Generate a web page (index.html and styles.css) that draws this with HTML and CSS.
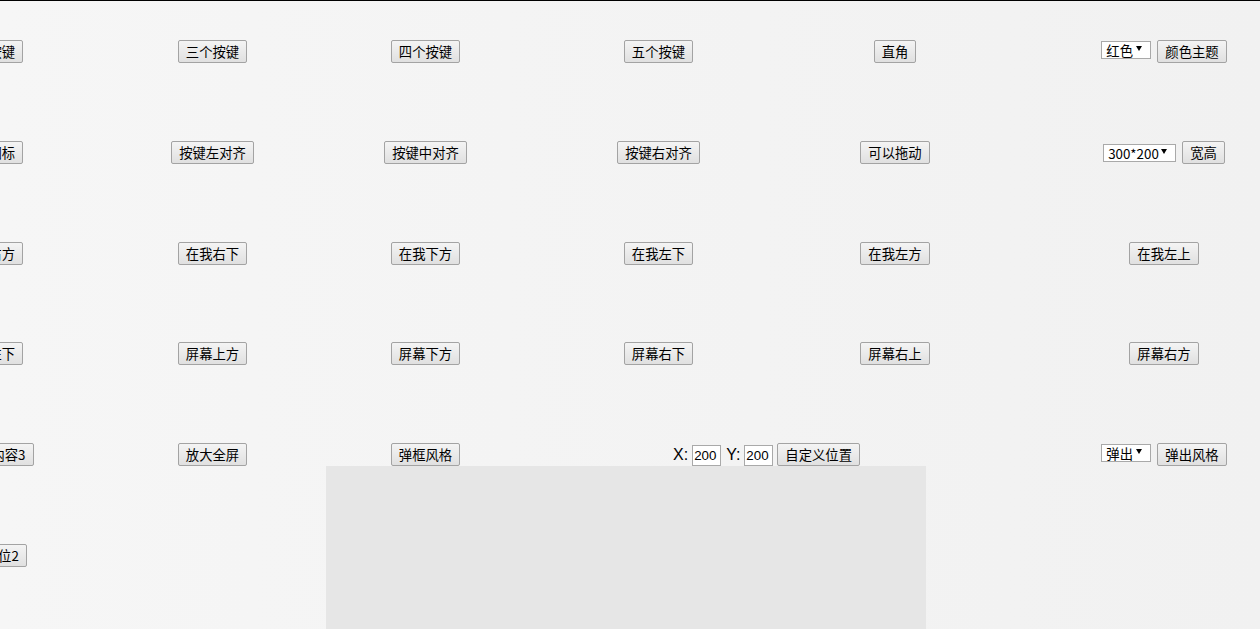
FILE: index.html
```html
<!DOCTYPE html>
<html lang="zh-CN">
<head>
<meta charset="utf-8">
<title>弹框示例</title>
<link rel="stylesheet" href="styles.css">
</head>
<body>
<div class="page">
  <div class="grid">
    <div class="cell"><button class="btn">两个按键</button></div>
    <div class="cell"><button class="btn">三个按键</button></div>
    <div class="cell"><button class="btn">四个按键</button></div>
    <div class="cell"><button class="btn">五个按键</button></div>
    <div class="cell"><button class="btn">直角</button></div>
    <div class="cell">
      <span class="selwrap"><select class="sel"><option>红色</option></select></span>
      <button class="btn">颜色主题</button>
    </div>

    <div class="cell"><button class="btn">显示图标</button></div>
    <div class="cell"><button class="btn">按键左对齐</button></div>
    <div class="cell"><button class="btn">按键中对齐</button></div>
    <div class="cell"><button class="btn">按键右对齐</button></div>
    <div class="cell"><button class="btn">可以拖动</button></div>
    <div class="cell">
      <span class="selwrap low"><select class="sel wide"><option>300*200</option></select></span>
      <button class="btn">宽高</button>
    </div>

    <div class="cell"><button class="btn">在我右方</button></div>
    <div class="cell"><button class="btn">在我右下</button></div>
    <div class="cell"><button class="btn">在我下方</button></div>
    <div class="cell"><button class="btn">在我左下</button></div>
    <div class="cell"><button class="btn">在我左方</button></div>
    <div class="cell"><button class="btn">在我左上</button></div>

    <div class="cell"><button class="btn">屏幕左下</button></div>
    <div class="cell"><button class="btn">屏幕上方</button></div>
    <div class="cell"><button class="btn">屏幕下方</button></div>
    <div class="cell"><button class="btn">屏幕右下</button></div>
    <div class="cell"><button class="btn">屏幕右上</button></div>
    <div class="cell"><button class="btn">屏幕右方</button></div>

    <div class="cell"><button class="btn">自定义内容3</button></div>
    <div class="cell"><button class="btn">放大全屏</button></div>
    <div class="cell"><button class="btn">弹框风格</button></div>
    <div class="cell span2 xy">
      <label class="lbl">X:</label><input class="num" type="text" value="200">
      <label class="lbl">Y:</label><input class="num" type="text" value="200">
      <button class="btn">自定义位置</button>
    </div>
    <div class="cell">
      <span class="selwrap"><select class="sel"><option>弹出</option></select></span>
      <button class="btn">弹出风格</button>
    </div>

    <div class="cell"><button class="btn">绝对定位2</button></div>
    <div class="cell"></div>
    <div class="cell"></div>
    <div class="cell"></div>
    <div class="cell"></div>
    <div class="cell"></div>
  </div>
  <div class="layer"></div>
</div>
</body>
</html>
```

FILE: styles.css
```css
html, body {
  margin: 0;
  height: 100%;
  overflow: hidden;
}

body {
  background: linear-gradient(to right, #f6f6f6, #f1f1f1);
  font-family: "Noto Sans CJK SC", "Liberation Sans", sans-serif;
  color: #000;
}

.page {
  position: relative;
  height: 628px;
  border-top: 1px solid #000;
}

.grid {
  display: grid;
  grid-template-columns: 230px 218px 208px 258px 215px 323px;
  grid-auto-rows: 100.8px;
  width: 1452px;
  margin-left: -126.5px;
  padding-top: 39px;
}

.cell {
  display: flex;
  justify-content: center;
  align-items: flex-start;
  gap: 6px;
}

.span2 {
  grid-column: span 2;
}

.btn {
  margin: 0;
  padding: 2px 7px;
  font: 13.33px/17px "Noto Sans CJK SC", "Liberation Sans", sans-serif;
  color: #000;
  border: 1px solid #a3a3a3;
  border-radius: 2px;
  background: linear-gradient(#f4f4f4, #e0e0e0);
  white-space: nowrap;
}

.selwrap {
  position: relative;
  display: block;
  margin-top: 1px;
}

.selwrap.low {
  margin-top: 3px;
}

.selwrap::after {
  content: "";
  position: absolute;
  right: 9px;
  top: 5px;
  border-left: 3px solid transparent;
  border-right: 3px solid transparent;
  border-top: 5px solid #000;
  pointer-events: none;
}

.sel {
  -webkit-appearance: none;
  appearance: none;
  display: block;
  box-sizing: border-box;
  width: 50px;
  height: 18px;
  margin: 0;
  padding: 1px 0 0 4px;
  border: 1px solid #a9a9a9;
  border-radius: 0;
  background: #fff;
  color: #000;
  font: 13.33px/15px "Noto Sans CJK SC", "Liberation Sans", sans-serif;
}

.sel.wide {
  width: 73px;
}

.xy {
  gap: 4px;
}

.lbl {
  font: 16px/23px "Liberation Sans", "Noto Sans CJK SC", sans-serif;
  color: #000;
  margin-left: 1px;
}

.num {
  box-sizing: border-box;
  width: 29px;
  height: 21px;
  margin: 2px 0 0 0;
  padding: 0 1px;
  border: 1px solid #a9a9a9;
  background: #fff;
  color: #000;
  font: 13.33px "Liberation Sans", "Noto Sans CJK SC", sans-serif;
}

.layer {
  position: absolute;
  left: 326px;
  top: 465px;
  width: 600px;
  height: 170px;
  background: #e6e6e6;
}
```
